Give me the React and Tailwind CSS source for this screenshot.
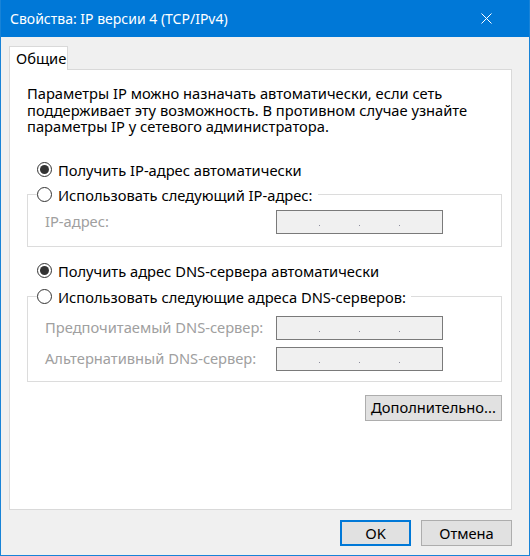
import { useState } from 'react';

const Radio = ({ checked }) => (
  <span className="w-[15px] h-[15px] rounded-full border border-[#333] bg-white flex items-center justify-center shrink-0">
    {checked && <span className="w-[9px] h-[9px] rounded-full bg-[#333]"></span>}
  </span>
);

const IpBox = () => (
  <div className="w-[167px] h-[24px] border border-[#7a7a7a] bg-[#f0f0f0] flex items-end pb-[7px]">
    <span className="w-[42px]"></span>
    <span className="w-[1px] h-[1px] bg-[#8c8c9c]"></span>
    <span className="w-[39px]"></span>
    <span className="w-[1px] h-[1px] bg-[#8c8c9c]"></span>
    <span className="w-[39px]"></span>
    <span className="w-[1px] h-[1px] bg-[#8c8c9c]"></span>
  </div>
);

const App = () => {
  const [ipAuto] = useState(true);
  const [dnsAuto] = useState(true);

  return (
    <div className="w-[530px] h-[556px] bg-[#f0f0f0] border-x border-b border-[#1883d7] flex flex-col font-['Noto_Sans',sans-serif] text-[14.7px] text-black">
      {/* Title bar */}
      <div className="h-[37px] bg-[#0078d7] flex items-center justify-between pl-[9px] pr-[37px] shrink-0">
        <span className="text-white text-[14px] leading-none">Свойства: IP версии 4 (TCP/IPv4)</span>
        <svg width="11" height="11" viewBox="0 0 11 11">
          <path d="M0.5 0.5 L10.5 10.5 M10.5 0.5 L0.5 10.5" stroke="white" strokeWidth="1" fill="none" />
        </svg>
      </div>

      <div className="pl-[8px] pr-[17px] pt-[9px]">
        {/* Tabs */}
        <div className="flex">
          <div className="h-[24px] w-[59px] border border-b-0 border-[#d9d9d9] bg-white pl-[6px] flex items-center -mb-[1px] relative z-10">
            Общие
          </div>
        </div>

        {/* Panel */}
        <div className="h-[441px] border border-[#d9d9d9] bg-white pl-[17px] pr-[9px] pt-[15px]">
          <p className="leading-[16.5px] w-[476px]">
            Параметры IP можно назначать автоматически, если сеть поддерживает эту возможность. В противном случае узнайте параметры IP у сетевого администратора.
          </p>

          <label className="flex items-center gap-[6px] ml-[10px] mt-[26px] leading-[18px]">
            <Radio checked={ipAuto} />
            <span>Получить IP-адрес автоматически</span>
          </label>

          <fieldset className="border border-[#dcdcdc] mt-[7px] h-[61px]">
            <legend className="ml-[9px] pr-[5px] leading-[18px]">
              <span className="flex items-center gap-[6px]">
                <Radio checked={!ipAuto} />
                <span>Использовать следующий IP-адрес:</span>
              </span>
            </legend>
            <div className="flex items-center justify-between mt-[6px] pl-[17px] pr-[58px] text-[#a0a0a0]">
              <span>IP-адрес:</span>
              <IpBox />
            </div>
          </fieldset>

          <label className="flex items-center gap-[6px] ml-[10px] mt-[15px] leading-[18px]">
            <Radio checked={dnsAuto} />
            <span>Получить адрес DNS-сервера автоматически</span>
          </label>

          <fieldset className="border border-[#dcdcdc] mt-[8px] h-[94px]">
            <legend className="ml-[9px] pr-[5px] leading-[18px]">
              <span className="flex items-center gap-[6px]">
                <Radio checked={!dnsAuto} />
                <span>Использовать следующие адреса DNS-серверов:</span>
              </span>
            </legend>
            <div className="flex flex-col gap-[7px] mt-[10px] pl-[17px] pr-[58px] text-[#a0a0a0]">
              <div className="flex items-center justify-between">
                <span>Предпочитаемый DNS-сервер:</span>
                <IpBox />
              </div>
              <div className="flex items-center justify-between">
                <span>Альтернативный DNS-сервер:</span>
                <IpBox />
              </div>
            </div>
          </fieldset>

          <div className="flex justify-end mt-[13px]">
            <button className="w-[137px] h-[26px] bg-[#e1e1e1] border border-[#adadad]">
              Дополнительно...
            </button>
          </div>
        </div>

        {/* Footer buttons */}
        <div className="flex justify-end gap-[10px] mt-[10px]">
          <button className="w-[71px] h-[26px] bg-[#e1e1e1] border-2 border-[#0078d7]">OK</button>
          <button className="w-[91px] h-[26px] bg-[#e1e1e1] border border-[#adadad]">Отмена</button>
        </div>
      </div>
    </div>
  );
};

export default App;
